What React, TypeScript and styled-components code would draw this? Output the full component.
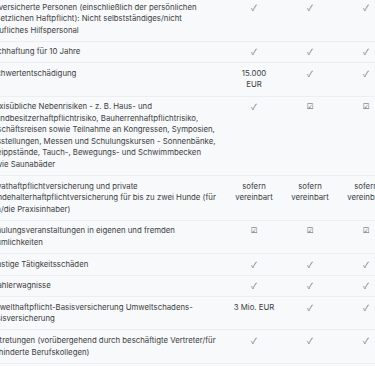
import styled, { createGlobalStyle } from 'styled-components';

const GlobalStyle = createGlobalStyle`
  html, body {
    margin: 0;
    padding: 0;
    background: #f8f9fa;
  }
`;

type Mark = 'check' | 'box' | string;

const rows: { label: string[]; values: Mark[] }[] = [
  {
    label: [
      'Mitversicherte Personen (einschließlich der persönlichen',
      'gesetzlichen Haftpflicht): Nicht selbstständiges/nicht',
      'berufliches Hilfspersonal',
    ],
    values: ['check', 'check', 'check'],
  },
  { label: ['Nachhaftung für 10 Jahre'], values: ['check', 'check', 'check'] },
  { label: ['Sachwertentschädigung'], values: ['15.000 EUR', 'check', 'check'] },
  {
    label: [
      'Praxisübliche Nebenrisiken - z. B. Haus- und',
      'Grundbesitzerhaftpflichtrisiko, Bauherrenhaftpflichtrisiko,',
      'Geschäftsreisen sowie Teilnahme an Kongressen, Symposien,',
      'Ausstellungen, Messen und Schulungskursen - Sonnenbänke,',
      'Kneippstände, Tauch-, Bewegungs- und Schwimmbecken',
      'sowie Saunabäder',
    ],
    values: ['check', 'box', 'box'],
  },
  {
    label: [
      'Privathaftpflichtversicherung und private',
      'Hundehalterhaftpflichtversicherung für bis zu zwei Hunde (für',
      'den/die Praxisinhaber)',
    ],
    values: ['sofern vereinbart', 'sofern vereinbart', 'sofern vereinbart'],
  },
  {
    label: ['Schulungsveranstaltungen in eigenen und fremden', 'Räumlichkeiten'],
    values: ['box', 'box', 'box'],
  },
  { label: ['Sonstige Tätigkeitsschäden'], values: ['check', 'check', 'check'] },
  { label: ['Strahlerwagnisse'], values: ['check', 'check', 'check'] },
  {
    label: ['Umwelthaftpflicht-Basisversicherung Umweltschadens-', 'Basisversicherung'],
    values: ['3 Mio. EUR', 'check', 'check'],
  },
  {
    label: ['Vertretungen (vorübergehend durch beschäftigte Vertreter/für', 'verhinderte Berufskollegen)'],
    values: ['check', 'check', 'check'],
  },
];

export default function App() {
  return (
    <Viewport>
      <GlobalStyle />
      <Table>
        <colgroup>
          <Col $w={245} />
          <Col $w={56} />
          <Col $w={56} />
          <Col $w={56} />
        </colgroup>
        <tbody>
          {rows.map((row) => (
            <Row key={row.label[0]}>
              <Label>
                {row.label.map((l) => (
                  <Line key={l}>{l}</Line>
                ))}
              </Label>
              {row.values.map((v, i) => (
                <Value key={i}>
                  {v === 'check' ? <Check>✓</Check> : v === 'box' ? <Box>☑</Box> : v}
                </Value>
              ))}
            </Row>
          ))}
        </tbody>
      </Table>
    </Viewport>
  );
}

const Viewport = styled.div`
  width: 375px;
  height: 366px;
  overflow: hidden;
  background: #f8f9fa;
`;
// table is scrolled sideways, so the first column starts off-screen
const Table = styled.table`
  border-collapse: collapse;
  table-layout: fixed;
  width: 413px;
  margin: -3px 0 0 -19px;
`;
const Col = styled.col<{ $w: number }>`
  width: ${(p) => p.$w}px;
`;
const Row = styled.tr`
  border-bottom: 1px solid #eceef0;
`;
const Label = styled.td`
  padding: 4.5px 6px;
  vertical-align: top;
  text-align: left;
  font-family: Inter, Roboto, sans-serif;
  font-size: 7.8px;
  line-height: 11.6px;
  color: #3c4043;
`;
const Line = styled.span`
  display: block;
  white-space: nowrap;
`;
const Value = styled(Label)`
  padding: 4.5px 7px;
  text-align: center;
`;
const Check = styled.span`
  display: inline-block;
  height: 11.6px;
  line-height: 11.6px;
  vertical-align: top;
  font-family: 'Noto Sans CJK SC', 'DejaVu Sans', sans-serif;
  font-size: 8.5px;
  color: #74787d;
`;
const Box = styled.span`
  display: inline-block;
  height: 11.6px;
  line-height: 11.6px;
  vertical-align: top;
  font-family: 'DejaVu Sans', sans-serif;
  font-size: 7.5px;
  color: #55585c;
`;
